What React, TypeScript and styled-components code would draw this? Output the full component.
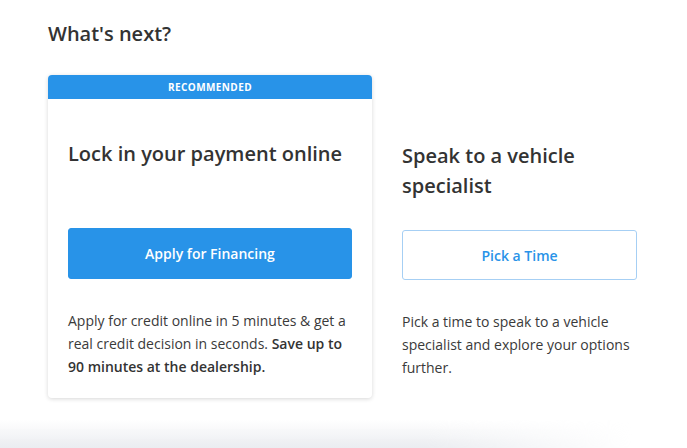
import styled, { createGlobalStyle } from "styled-components"

const GlobalStyle = createGlobalStyle`
html, body {
    margin: 0;
    padding: 0;
    background: #ffffff;
}
body {
    font-family: "Open Sans", "Noto Sans", sans-serif;
    color: #333333;
    overflow: hidden;
}
`

const Page = styled.div`
width: 687px;
height: 448px;
display: flex;
flex-direction: column;
`

const Content = styled.section`
padding: 21px 48px 0 48px;
`

const Heading = styled.h2`
margin: 0 0 28px 0;
font-size: 20px;
line-height: 26px;
font-weight: 600;
color: #333333;
`

const Options = styled.div`
display: grid;
grid-template-columns: 324px 235px;
column-gap: 30px;
align-items: start;
`

const Card = styled.div`
border-radius: 4px;
background: #ffffff;
box-shadow: 0 1px 4px rgba(0, 0, 0, 0.16);
overflow: hidden;
`

const Banner = styled.div`
height: 24px;
background: #2893e8;
color: #ffffff;
font-size: 10px;
font-weight: 700;
letter-spacing: 0.4px;
display: flex;
align-items: center;
justify-content: center;
text-transform: uppercase;
`

const Body = styled.div<{ $inset?: boolean }>`
padding: ${(p) => (p.$inset ? "40px 20px 20px 20px" : "66px 0 0 0")};
display: flex;
flex-direction: column;
`

const Title = styled.h3`
margin: 0 0 29px 0;
min-height: 60px;
font-size: 20px;
line-height: 30px;
font-weight: 600;
color: #333333;
`

const Button = styled.button<{ $outline?: boolean }>`
height: ${(p) => (p.$outline ? "50px" : "51px")};
width: 100%;
border-radius: 3px;
border: 1px solid ${(p) => (p.$outline ? "#a6cff4" : "#2893e8")};
background: ${(p) => (p.$outline ? "#ffffff" : "#2893e8")};
color: ${(p) => (p.$outline ? "#2893e8" : "#ffffff")};
font-family: inherit;
font-size: 14px;
font-weight: 600;
cursor: pointer;
`

const Text = styled.p`
margin: 31px 0 0 0;
font-size: 14px;
line-height: 22.8px;
color: #3a3a3a;
strong {
    font-weight: 600;
    color: #333333;
}
`

const Fade = styled.div`
margin-top: auto;
height: 28px;
background: linear-gradient(to bottom, rgba(234, 236, 240, 0), rgba(234, 236, 240, 1));
-webkit-mask-image: linear-gradient(to right, #000 0%, #000 62%, transparent 92%);
mask-image: linear-gradient(to right, #000 0%, #000 62%, transparent 92%);
`

const App = () => {
    return (
        <>
            <GlobalStyle />
            <Page>
                <Content>
                    <Heading>What's next?</Heading>
                    <Options>
                        <Card>
                            <Banner>Recommended</Banner>
                            <Body $inset>
                                <Title>Lock in your payment online</Title>
                                <Button>Apply for Financing</Button>
                                <Text>
                                    Apply for credit online in 5 minutes &amp; get a real credit decision in seconds.{" "}
                                    <strong>Save up to 90 minutes at the dealership.</strong>
                                </Text>
                            </Body>
                        </Card>
                        <Body>
                            <Title>Speak to a vehicle specialist</Title>
                            <Button $outline>Pick a Time</Button>
                            <Text>
                                Pick a time to speak to a vehicle specialist and explore your options further.
                            </Text>
                        </Body>
                    </Options>
                </Content>
                <Fade />
            </Page>
        </>
    )
}

export default App
